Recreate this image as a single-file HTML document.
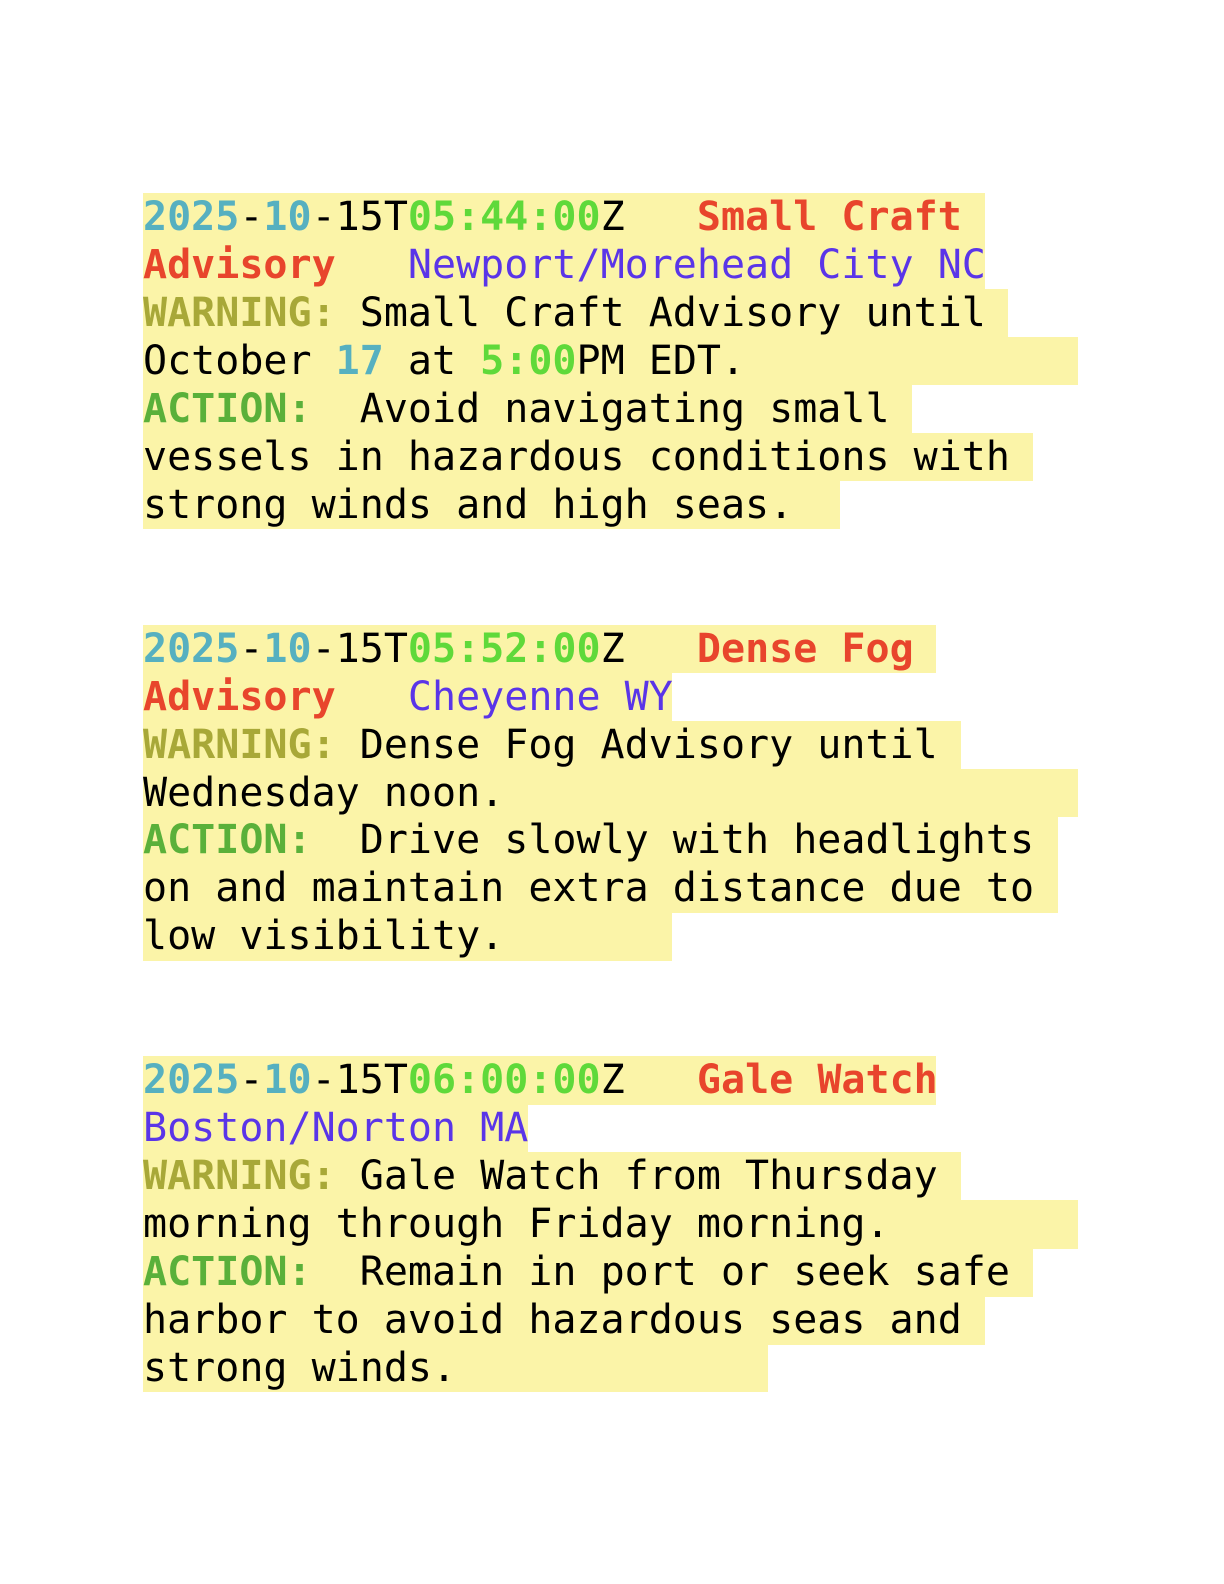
<!DOCTYPE html>
<html><head><meta charset="utf-8"><style>
body{margin:0;background:#fff;width:1224px;height:1584px;overflow:hidden;font-family:"DejaVu Sans Mono","Liberation Mono",monospace;font-size:40px;color:#000;position:relative}
.l{position:absolute;left:143px;height:48.5px;line-height:48.5px;white-space:pre}
.l>span{display:inline-block;background:#fbf4a8;height:48.5px;vertical-align:top}
.c{color:#56b0c0;font-weight:bold}.g{color:#5fd93a;font-weight:bold}.r{color:#e8452c;font-weight:bold}.p{color:#5a35e8}.w{color:#a8a838;font-weight:bold}.a{color:#5ab03a;font-weight:bold}
</style></head><body>
<div class="l" style="top:193px"><span style="width:842px"><b class="c">2025</b>-<b class="c">10</b>-15T<b class="g">05:44:00</b>Z   <b class="r">Small Craft</b></span></div>
<div class="l" style="top:241px"><span style="width:842px"><b class="r">Advisory</b>   <span class="p">Newport/Morehead City NC</span></span></div>
<div class="l" style="top:288.9px"><span style="width:865px"><b class="w">WARNING:</b> Small Craft Advisory until</span></div>
<div class="l" style="top:336.9px"><span style="width:935px">October <b class="c">17</b> at <b class="g">5:00</b>PM EDT.</span></div>
<div class="l" style="top:384.8px"><span style="width:769px"><b class="a">ACTION:</b>  Avoid navigating small</span></div>
<div class="l" style="top:432.8px"><span style="width:890px">vessels in hazardous conditions with</span></div>
<div class="l" style="top:480.7px"><span style="width:697px">strong winds and high seas.</span></div>

<div class="l" style="top:624.6px"><span style="width:793px"><b class="c">2025</b>-<b class="c">10</b>-15T<b class="g">05:52:00</b>Z   <b class="r">Dense Fog</b></span></div>
<div class="l" style="top:672.6px"><span style="width:529px"><b class="r">Advisory</b>   <span class="p">Cheyenne WY</span></span></div>
<div class="l" style="top:720.5px"><span style="width:818px"><b class="w">WARNING:</b> Dense Fog Advisory until</span></div>
<div class="l" style="top:768.5px"><span style="width:935px">Wednesday noon.</span></div>
<div class="l" style="top:816.4px"><span style="width:915px"><b class="a">ACTION:</b>  Drive slowly with headlights</span></div>
<div class="l" style="top:864.4px"><span style="width:915px">on and maintain extra distance due to</span></div>
<div class="l" style="top:912.3px"><span style="width:529px">low visibility.</span></div>

<div class="l" style="top:1056.2px"><span style="width:793px"><b class="c">2025</b>-<b class="c">10</b>-15T<b class="g">06:00:00</b>Z   <b class="r">Gale Watch</b></span></div>
<div class="l" style="top:1104.2px"><span style="width:385px"><span class="p">Boston/Norton MA</span></span></div>
<div class="l" style="top:1152.1px"><span style="width:818px"><b class="w">WARNING:</b> Gale Watch from Thursday</span></div>
<div class="l" style="top:1200px"><span style="width:935px">morning through Friday morning.</span></div>
<div class="l" style="top:1248px"><span style="width:890px"><b class="a">ACTION:</b>  Remain in port or seek safe</span></div>
<div class="l" style="top:1296px"><span style="width:842px">harbor to avoid hazardous seas and</span></div>
<div class="l" style="top:1343.9px"><span style="width:625px">strong winds.</span></div>
</body></html>
